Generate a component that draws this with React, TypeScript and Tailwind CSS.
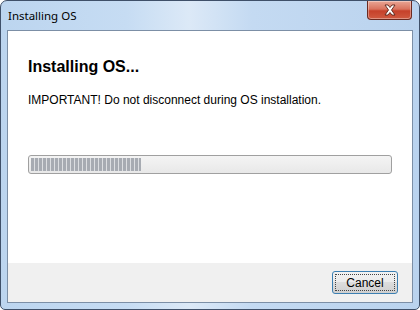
export default function App() {
  return (
    <div className="h-[310px] w-[420px] overflow-hidden bg-white">
      <div
        className="flex h-[310px] w-[420px] flex-col rounded-t-[7px] rounded-b-[5px] border border-[#3f5069] bg-[linear-gradient(90deg,#bcd5ef_0%,#c6dcf3_30%,#dce9f7_45%,#c4daf2_60%,#bad3ee_100%)] px-[6px] pb-[6px]"
        style={{ fontFamily: '"Liberation Sans", Arial, sans-serif' }}
      >
        {/* title bar */}
        <div className="flex h-[29px] shrink-0 items-start justify-between">
          <span
            className="pl-[1px] pt-[6px] text-[11.5px] text-black"
            style={{ fontFamily: '"Noto Sans", "Open Sans", sans-serif' }}
          >
            Installing OS
          </span>
          <div className="mr-[1px] flex h-[19px] w-[45px] items-center justify-center rounded-b-[4px] border border-t-0 border-[#6b2a20] bg-[linear-gradient(180deg,#e9a695_0%,#d9735e_45%,#c6412a_55%,#d05a40_100%)] shadow-[inset_0_0_0_1px_rgba(255,255,255,0.35)]">
            <svg width="14" height="12" viewBox="0 0 14 12">
              <path
                d="M2 1 L5 1 L7 3.5 L9 1 L12 1 L8.5 6 L12 11 L9 11 L7 8.5 L5 11 L2 11 L5.5 6 Z"
                fill="#ffffff"
                stroke="#5a2418"
                strokeWidth="0.9"
                strokeLinejoin="round"
              />
            </svg>
          </div>
        </div>

        {/* client area */}
        <div className="flex flex-1 flex-col border border-[#7c8fa6] bg-white">
          <div className="flex-1 px-[20px] pt-[26px]">
            <h1 className="text-[16px] font-bold leading-[20px] text-black">Installing OS...</h1>
            <p className="mt-[16px] text-[12px] leading-[15px] text-black">
              IMPORTANT! Do not disconnect during OS installation.
            </p>
            <div className="mt-[47px] h-[19px] w-[364px] rounded-[3px] border border-[#a0a0a0] bg-[linear-gradient(180deg,#f4f4f4,#e8e8e8)] p-[2px]">
              <div className="h-full w-[110px] bg-[repeating-linear-gradient(90deg,#a7abb2_0px,#a7abb2_3px,#dcdee1_3px,#dcdee1_4px)]" />
            </div>
          </div>

          {/* footer */}
          <div className="flex h-[39px] shrink-0 items-center justify-end bg-[#f0f0f0] pr-[14px]">
            <button className="flex h-[23px] w-[66px] items-center justify-center rounded-[3px] border border-[#3c7fb1] bg-[linear-gradient(180deg,#f2f2f2_0%,#ebebeb_50%,#dddddd_50%,#cfcfcf_100%)] p-[2px]">
              <span className="flex h-full w-full items-center justify-center border border-dotted border-[#444] text-[12px] text-black">
                Cancel
              </span>
            </button>
          </div>
        </div>
      </div>
    </div>
  );
}
